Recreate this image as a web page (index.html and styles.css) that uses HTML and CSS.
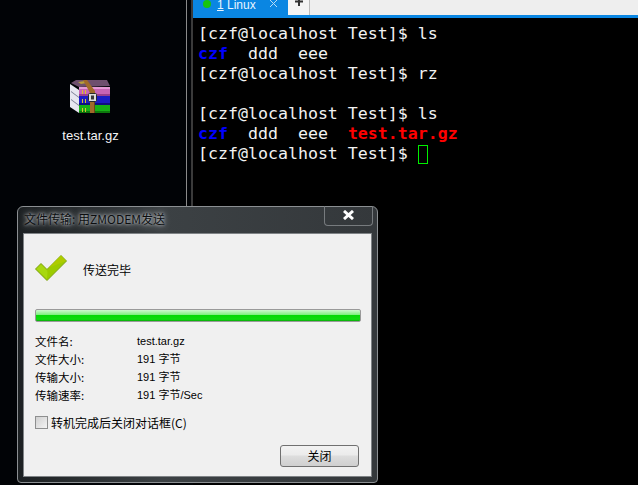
FILE: index.html
```html
<!DOCTYPE html>
<html lang="zh">
<head>
<meta charset="utf-8">
<title>文件传输</title>
<link rel="stylesheet" href="styles.css">
</head>
<body>
<div class="desktop">
  <div class="desk-icon">
    <svg class="rar" width="42" height="34" viewBox="0 0 42 34">
      <path fill="#e6e6f0" d="M0 4l9 6v23L0 27z"/>
      <path fill="#7c7f96" d="M1 11l8 6v1l-8-6zM1 19l8 6v1l-8-6z"/>
      <path fill="#6e4f6e" d="M1 3 6 0h31l3 6-31 1z"/>
      <path fill="#b8a03a" d="M8 2l7-1 2 2-6 1z"/>
      <path fill="#c864b4" d="M9 7h31v9H9z"/>
      <path fill="#e49ad4" d="M9 7h31v2H9z"/>
      <path fill="#9a3f8c" d="M9 14h31v2H9z"/>
      <path fill="#1c1cc4" d="M9 16h31v9H9z"/>
      <path fill="#101080" d="M9 23h31v2H9z"/>
      <path fill="#16b016" d="M9 25h31v8H9z"/>
      <path fill="#0c780c" d="M9 31h31v2H9z"/>
      <path fill="#d8c030" d="M12 10h1v4h-1zM15 10h1v4h-1zM12 19h1v4h-1zM15 19h1v4h-1zM12 28h1v4h-1zM15 28h1v4h-1z"/>
      <path fill="#a06a2a" d="M13 0h4l8 11v22h-5V13z"/>
      <path fill="#6a4218" d="M24 13h1v20h-1z"/>
      <rect x="18.500" y="13.500" width="8" height="8" rx="1" fill="#dcdcdc" stroke="#2a2a2a"/>
      <rect x="21" y="15.500" width="3" height="4" fill="#3a3a3a"/>
    </svg>
    <span class="desk-label">test.tar.gz</span>
  </div>
  <div class="split"></div>
  <section class="terminal">
    <header class="tabbar">
      <div class="tab">
        <span class="dot"></span>
        <span class="tab-title"><u>1</u> Linux</span>
        <svg class="tab-close" width="7" height="7" viewBox="0 0 7 7"><path d="M0 0l7 7M7 0L0 7" stroke="#b5dcf7"/></svg>
      </div>
      <div class="tab-add"><svg width="8" height="6" viewBox="0 0 8 6"><path d="M0 1.500h8M4 -3v9" stroke="#333" stroke-width="2"/></svg></div>
      <div class="tab-rest"></div>
    </header>
    <pre class="screen">[czf@localhost Test]$ ls
<b class="blue">czf</b>  ddd  eee
[czf@localhost Test]$ rz

[czf@localhost Test]$ ls
<b class="blue">czf</b>  ddd  eee  <b class="red">test.tar.gz</b>
[czf@localhost Test]$ <span class="cursor"></span></pre>
  </section>

  <div class="dialog">
    <div class="titlebar">
      <span class="title">文件传输: 用ZMODEM发送</span>
      <button class="win-close"><svg width="13" height="10" viewBox="0 0 13 10"><path d="M2 1l9 8M11 1L2 9" stroke="#fff" stroke-width="3"/></svg></button>
    </div>
    <div class="client">
      <div class="status">
        <svg width="32" height="26" viewBox="0 0 32 26"><path d="M.5 14 6 8.500l6 6L26 .5l5.500 5.500L12 25.500z" fill="#9ccb00" stroke="#7ca010"/><path d="M12 14.500 26 .5l5 5.500L13 13z" fill="#aecb00"/><path d="M1.500 14 6 9.500l6 6 .5 2L12 24z" fill="#a8d810"/></svg>
        <span>传送完毕</span>
      </div>
      <div class="progress"></div>
      <dl class="info">
        <dt>文件名:</dt><dd>test.tar.gz</dd>
        <dt>文件大小:</dt><dd>191 字节</dd>
        <dt>传输大小:</dt><dd>191 字节</dd>
        <dt>传输速率:</dt><dd>191 字节/Sec</dd>
      </dl>
      <label class="check"><span class="box"></span>转机完成后关闭对话框(C)</label>
      <div class="actions"><button class="btn">关闭</button></div>
    </div>
  </div>
</div>
</body>
</html>
```

FILE: styles.css
```css
* { box-sizing: border-box; }
html, body { margin: 0; padding: 0; }
body { background: #000; width: 638px; height: 485px; overflow: hidden; }
.desktop {
  position: relative; width: 638px; height: 485px; background: #010306;
  font-family: "Noto Sans CJK SC", "Liberation Sans", sans-serif; font-size: 12px;
}
.desk-icon {
  position: absolute; left: 50px; top: 80px; width: 81px;
  display: flex; flex-direction: column; align-items: center; gap: 14px;
}
.desk-label { color: #f4f4f4; font: 13px/16px "Liberation Sans", sans-serif; }
.split {
  position: absolute; left: 186px; top: 0; width: 7px; height: 206px;
  border-left: 1px solid #8a8a8a; border-right: 2px solid #3a3a3a;
}
.terminal { position: absolute; left: 193px; top: 0; width: 445px; height: 485px; background: #000; }
.tabbar { display: flex; height: 18px; background: #0a86e2; }
.tab {
  width: 95px; height: 18px; background: #0a86e2; color: #e8f4ff;
  display: flex; align-items: flex-start; padding: 0 11px 0 10px;
  font: 12px/10px "Liberation Sans", sans-serif;
}
.dot { width: 8px; height: 8px; border-radius: 50%; background: #17c40f; margin-right: 6px; flex: none; }
.tab-title { flex: 1; }
.tab-close { flex: none; }
.tab-add {
  width: 22px; height: 15px; background: #f4f4f4; border-right: 1px solid #bbb;
  display: flex; justify-content: center; align-items: flex-start;
}
.tab-rest { flex: 1; height: 15px; background: #eeeeee; }
.screen {
  margin: 0; padding: 6px 0 0 5px; color: #f2f2f2;
  font: 16.6px/20px "DejaVu Sans Mono", monospace;
}
.blue { color: #0000ff; }
.red { color: #ff0000; }
.cursor {
  display: inline-block; width: 10px; height: 19px; border: 1px solid #00f000;
  vertical-align: -5px;
}
.dialog {
  position: absolute; left: 17px; top: 206px; width: 361px; height: 277px;
  padding: 0 5px 5px 5px; border: 1px solid #8b8f92; border-radius: 6px 6px 4px 4px;
  background: linear-gradient(90deg, #1c2022, #3c4144 40%, #34383b);
  display: flex; flex-direction: column;
}
.titlebar { position: relative; height: 26px; flex: none; padding: 5px 0 0 1px; }
.title { color: #0c0e10; font-size: 12px; line-height: 14px; display: block; text-shadow: 0 0 6px #d8dce0, 0 0 3px #b8bcc0; }
.win-close {
  position: absolute; right: -1px; top: -1px; width: 49px; height: 20px; padding: 0 0 2px;
  background: transparent; border: 1px solid #777b7e; border-top: 0; border-radius: 0 0 4px 4px;
  display: flex; align-items: center; justify-content: center;
}
.client {
  flex: 1; background: #f0f0f0; border: 1px solid #7f8386; padding: 0 11px;
  display: flex; flex-direction: column; color: #000;
}
.status { display: flex; align-items: center; gap: 16px; padding: 18px 0 0; height: 50px; }
.status span { font-size: 12px; margin-top: 2px; }
.progress {
  margin-top: 25px; width: 326px; height: 13px; flex: none; border: 1px solid #9a9a9a; border-radius: 2px;
  background: linear-gradient(#d0f8d0, #7cf07c 45%, #06d806 50%, #10dc10 85%, #0aa80a);
}
.info {
  margin: 10px 0 0; display: grid; grid-template-columns: 102px 1fr; grid-auto-rows: 18px;
  align-items: center; font-size: 11.5px;
}
.info dt, .info dd { margin: 0; line-height: 18px; }
.info dd { font-family: "Liberation Sans", "Noto Sans CJK SC", sans-serif; font-size: 11px; }
.check { display: flex; align-items: center; gap: 3px; margin-top: 11px; height: 14px; font-size: 12px; }
.box {
  width: 13px; height: 13px; flex: none; border: 1px solid #8e8f8f;
  background: linear-gradient(135deg, #d0d0d0, #f4f4f4);
}
.actions { display: flex; justify-content: flex-end; margin: 16px 1px 0 0; }
.btn {
  width: 79px; height: 22px; border: 1px solid #707070; border-radius: 3px; padding: 0;
  background: linear-gradient(#f2f2f2, #ebebeb 45%, #dddddd 50%, #cfcfcf);
  font: 12px/18px "Noto Sans CJK SC", sans-serif; color: #000;
}
```
